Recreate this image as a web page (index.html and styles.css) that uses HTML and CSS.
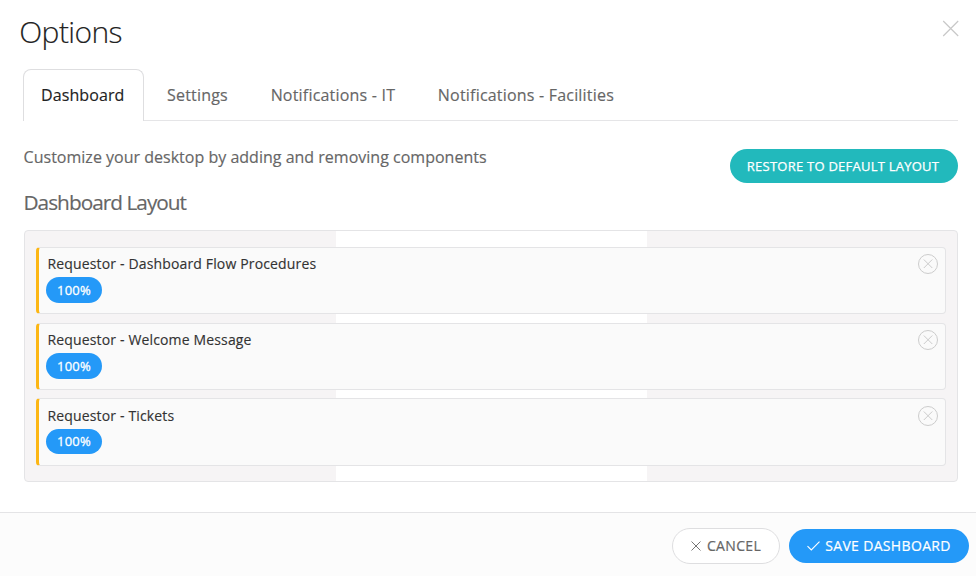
FILE: index.html
```html
<!DOCTYPE html>
<html lang="en">
<head>
<meta charset="utf-8">
<title>Options</title>
<link rel="stylesheet" href="styles.css">
</head>
<body>
<div class="dialog">
  <header class="dialog-header">
    <h1>Options</h1>
    <svg class="close" width="17" height="17" viewBox="0 0 17 17"><path d="M1.2 1L16.2 16M16.2 1L1.2 16"/></svg>
  </header>
  <nav class="tabs">
    <a class="tab active">Dashboard</a>
    <a class="tab">Settings</a>
    <a class="tab">Notifications - IT</a>
    <a class="tab">Notifications - Facilities</a>
  </nav>
  <main class="content">
    <div class="intro">
      <div>
        <p>Customize your desktop by adding and removing components</p>
        <h2>Dashboard Layout</h2>
      </div>
      <button class="btn restore">RESTORE TO DEFAULT LAYOUT</button>
    </div>
    <section class="layout">
      <article class="card">
        <div><h3>Requestor - Dashboard Flow Procedures</h3><span class="badge">100%</span></div>
        <svg class="remove" width="20" height="20" viewBox="0 0 20 20"><circle cx="10" cy="10" r="9.5"/><path d="M5.8 5.5L14.3 14M14.3 5.5L5.8 14"/></svg>
      </article>
      <article class="card">
        <div><h3>Requestor - Welcome Message</h3><span class="badge">100%</span></div>
        <svg class="remove" width="20" height="20" viewBox="0 0 20 20"><circle cx="10" cy="10" r="9.5"/><path d="M5.8 5.5L14.3 14M14.3 5.5L5.8 14"/></svg>
      </article>
      <article class="card last">
        <div><h3>Requestor - Tickets</h3><span class="badge">100%</span></div>
        <svg class="remove" width="20" height="20" viewBox="0 0 20 20"><circle cx="10" cy="10" r="9.5"/><path d="M5.8 5.5L14.3 14M14.3 5.5L5.8 14"/></svg>
      </article>
    </section>
  </main>
  <footer class="dialog-footer">
    <button class="btn cancel"><svg width="10" height="10" viewBox="0 0 10 10"><path d="M.5 .5L9.5 9.5M9.5 .5L.5 9.5"/></svg><span>CANCEL</span></button>
    <button class="btn save"><svg width="13" height="10" viewBox="0 0 13 10"><path d="M.5 5.2L4.3 9L12.5 .7"/></svg><span>SAVE DASHBOARD</span></button>
  </footer>
</div>
</body>
</html>
```
FILE: styles.css
```css
* { box-sizing: border-box; }
body {
  margin: 0;
  background: #fff;
  color: #666;
  font-family: "Open Sans", "Noto Sans", sans-serif;
  -webkit-text-stroke: .15px;
}
h1, h2, h3, p { margin: 0; font-weight: 400; }
svg { fill: none; flex: none; display: block; }
.dialog { height: 576px; display: flex; flex-direction: column; }
.dialog-header {
  height: 69px;
  padding: 11px 17px 0 19.3px;
  display: flex;
  justify-content: space-between;
}
h1 { font-size: 30px; font-weight: 300; line-height: 42px; letter-spacing: -.6px; color: #222; }
.close { margin-top: 9px; stroke: #c8c8c8; stroke-width: 1.2; }
.tabs {
  display: flex;
  height: 52px;
  margin: 0 18px 0 23px;
  box-shadow: inset 0 -1px #e5e5e7;
}
.tab {
  padding: 0 24.7px 0 18px;
  font-size: 16px;
  letter-spacing: .2px;
  line-height: 52px;
  white-space: nowrap;
}
.tab.active {
  width: 121px;
  margin-right: 5px;
  padding: 0 0 0 17px;
  letter-spacing: .1px;
  line-height: 50px;
  color: #222;
  background: #fff;
  border: 1px solid #dedee0;
  border-bottom: 0;
  border-radius: 8px 8px 0 0;
}
.content { flex: 1; padding: 0 18px 0 24px; }
.intro { height: 109px; display: flex; justify-content: space-between; }
.intro p { margin: 24px 0 0 -.4px; font-size: 16px; line-height: 24px; letter-spacing: .01px; }
h2 { margin: 18px 0 0 -.5px; font-size: 20.8px; line-height: 30px; letter-spacing: -.98px; }
.btn {
  display: flex;
  align-items: center;
  justify-content: center;
  padding: 0;
  border: 0;
  border-radius: 18px;
  font: 14px "Open Sans", "Noto Sans", sans-serif;
  letter-spacing: .34px;
  white-space: nowrap;
  -webkit-text-stroke: .2px;
}
.btn span { position: relative; top: -1px; }
.restore {
  width: 228px;
  height: 34px;
  margin-top: 28px;
  padding-right: 2px;
  background: #22b9bc;
  color: #fff;
  font-size: 13px;
  letter-spacing: .24px;
  -webkit-text-stroke: .25px;
}
.layout {
  height: 252px;
  padding: 16px 11px 0;
  border: 1px solid #e4e4e6;
  border-radius: 4px;
  background: linear-gradient(90deg, #f6f4f5 310.7px, #fff 310.7px 621.7px, #f6f4f5 621.7px);
}
.card {
  height: 67px;
  margin-bottom: 9px;
  padding: 6px 7px 0 7px;
  display: flex;
  justify-content: space-between;
  background: #fafafa;
  border: 1px solid #e4e4e6;
  border-left: 3px solid #fcb614;
  border-radius: 4px;
}
.card:nth-child(2) { margin-bottom: 8px; }
.card.last { height: 68px; padding-top: 7px; }
h3 { margin-left: 1.5px; font-size: 14px; line-height: 20px; letter-spacing: .15px; color: #333; }
.badge {
  display: block;
  width: 56px;
  height: 26px;
  margin-top: 3px;
  border-radius: 13px;
  background: #2499f8;
  color: #fff;
  font-size: 13px;
  letter-spacing: .2px;
  line-height: 26px;
  text-align: center;
  -webkit-text-stroke: .3px;
}
.last .badge { height: 25px; line-height: 25px; }
.remove { stroke: #ccc; stroke-width: 1; }
.dialog-footer {
  height: 64px;
  padding: 15px 7px 0 0;
  display: flex;
  justify-content: flex-end;
  gap: 9px;
  background: #fcfcfc;
  border-top: 1px solid #e4e4e6;
}
.btn svg { stroke: currentColor; stroke-width: 1.1; }
.cancel {
  width: 108px;
  height: 36px;
  gap: 6px;
  border: 1px solid #dedee0;
  background: #fff;
  color: #666;
}
.cancel svg { stroke-width: .9; }
.save {
  width: 180px;
  height: 34px;
  margin-top: 1px;
  gap: 5px;
  background: #2499f8;
  color: #fff;
}
```
